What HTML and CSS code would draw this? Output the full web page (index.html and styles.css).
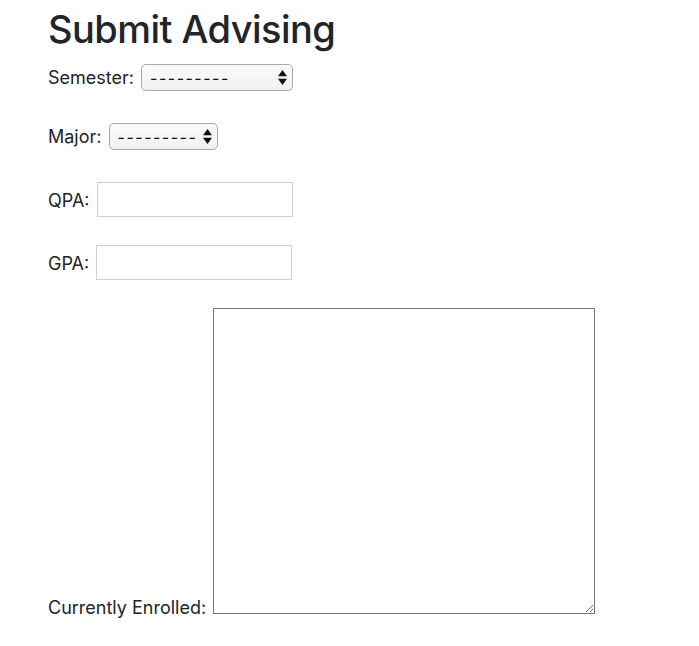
FILE: index.html
```html
<!DOCTYPE html>
<html lang="en">
<head>
<meta charset="utf-8">
<title>Submit Advising</title>
<link rel="stylesheet" href="styles.css">
</head>
<body>
<main class="page">
  <h1 class="title">Submit Advising</h1>
  <form class="form">
    <p class="row row-select">
      <label class="label" for="sem">Semester:</label>
      <span class="select-wrap">
        <select id="sem" class="select select-sem"><option>---------</option></select>
        <svg class="arrows" width="11" height="17" viewBox="0 0 11 17"><path d="M5.5 1 L10 7.3 H1 Z M1 9.7 H10 L5.5 16 Z" fill="#111"/></svg>
      </span>
    </p>
    <p class="row row-select">
      <label class="label" for="major">Major:</label>
      <span class="select-wrap">
        <select id="major" class="select select-major"><option>---------</option></select>
        <svg class="arrows" width="11" height="17" viewBox="0 0 11 17"><path d="M5.5 1 L10 7.3 H1 Z M1 9.7 H10 L5.5 16 Z" fill="#111"/></svg>
      </span>
    </p>
    <p class="row">
      <label class="label" for="qpa">QPA:</label>
      <input id="qpa" class="text-input" type="text">
    </p>
    <p class="row">
      <label class="label" for="gpa">GPA:</label>
      <input id="gpa" class="text-input" type="text">
    </p>
    <p class="row">
      <label class="label" for="enrolled">Currently Enrolled:</label>
      <textarea id="enrolled" class="area"></textarea>
    </p>
  </form>
</main>
</body>
</html>
```

FILE: styles.css
```css
html, body {
  margin: 0;
  padding: 0;
  background: #ffffff;
}

body {
  font-family: Inter, "Noto Sans", "Liberation Sans", sans-serif;
  font-size: 18px;
  line-height: 24px;
  color: #212529;
}

.page {
  padding: 5px 48px 0 48px;
}

.title {
  margin: 0 0 11px 0;
  font-size: 38px;
  line-height: 48px;
  font-weight: 500;
  letter-spacing: -0.55px;
}

.form {
  margin: 0;
}

.row {
  margin: 0 0 28px 0;
  white-space: nowrap;
}

.row-select {
  margin-bottom: 32px;
}

.label {
  margin-right: 2px;
}

.select-wrap {
  position: relative;
  display: inline-block;
  vertical-align: baseline;
}

.select {
  appearance: none;
  -webkit-appearance: none;
  box-sizing: border-box;
  height: 27px;
  margin: 0;
  padding: 0 20px 0 8px;
  font-family: Inter, "Noto Sans", "Liberation Sans", sans-serif;
  font-size: 16px;
  letter-spacing: 1.5px;
  color: #111;
  background: linear-gradient(#fbfbfb, #f1f1f1);
  border: 1px solid #a9a9a9;
  border-radius: 5px;
}

.select-sem {
  width: 152px;
}

.select-major {
  width: 109px;
}

.arrows {
  position: absolute;
  right: 5px;
  top: 5px;
  pointer-events: none;
}

.text-input {
  box-sizing: border-box;
  width: 196px;
  height: 35px;
  margin: 0;
  padding: 8px 6px 5px 6px;
  font-family: inherit;
  font-size: 16px;
  border: 1px solid #cfcfcf;
  border-radius: 0;
  background: #fff;
  vertical-align: baseline;
}

.area {
  box-sizing: border-box;
  width: 382px;
  height: 306px;
  margin: 0;
  padding: 2px;
  border: 1px solid #767676;
  font-family: inherit;
  font-size: 16px;
  vertical-align: baseline;
}
```
